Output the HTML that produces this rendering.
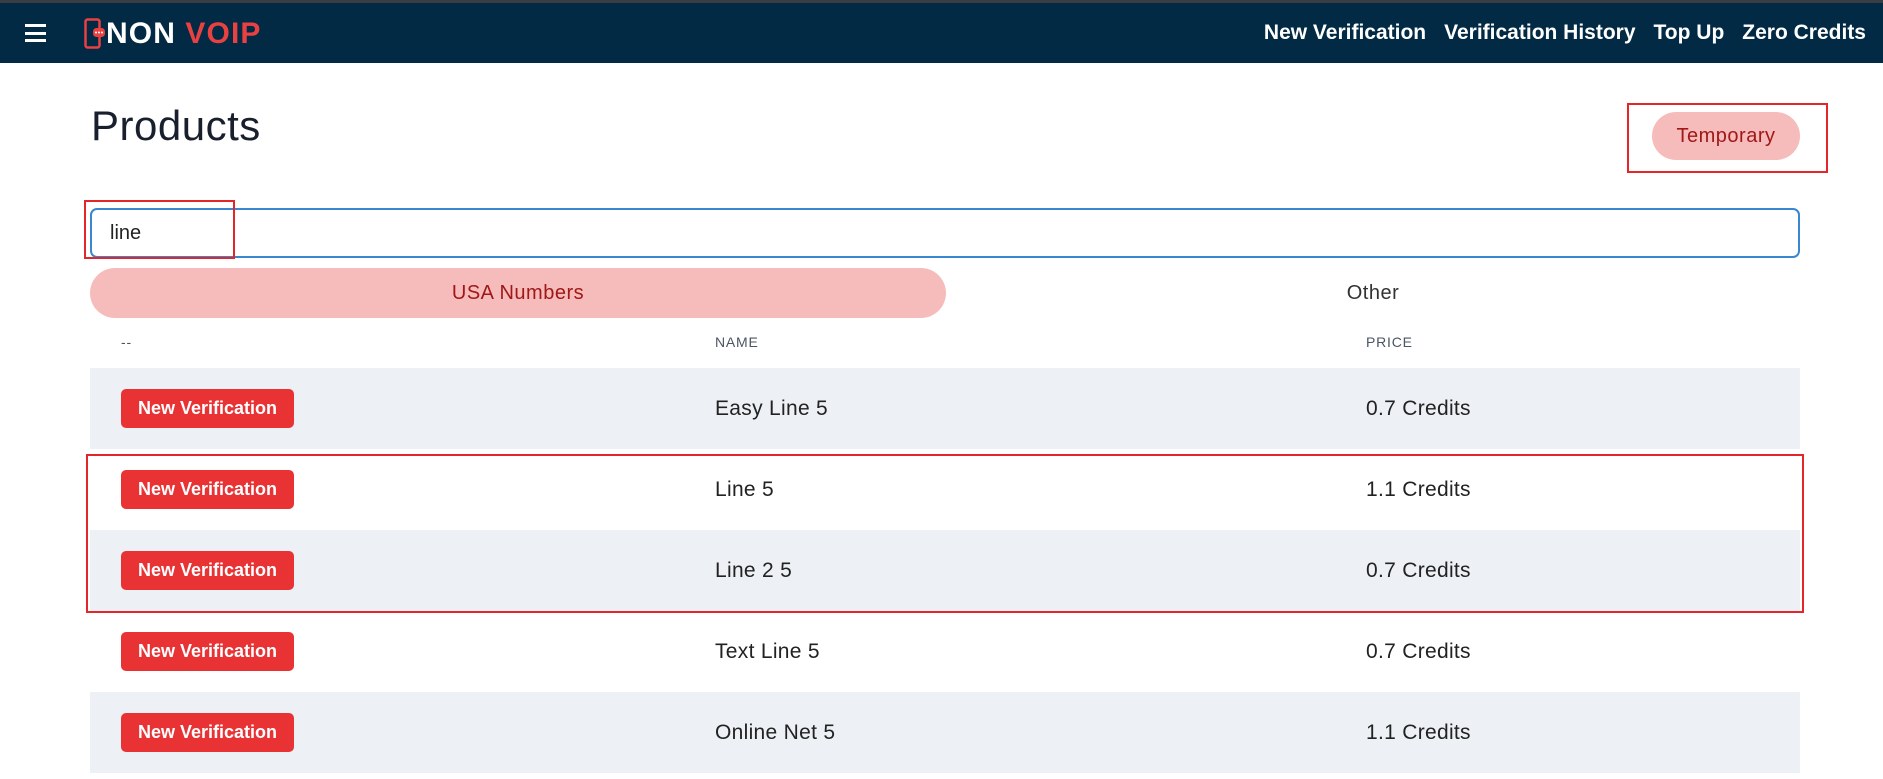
<!DOCTYPE html>
<html><head><meta charset="utf-8"><style>
*{box-sizing:border-box;margin:0;padding:0}
body{width:1883px;height:779px;overflow:hidden;background:#fff;font-family:"Liberation Sans",sans-serif;color:#1f2430;position:relative}
.top{position:absolute;left:0;top:0;width:1883px;height:3px;background:#3a3d42}
.nav{position:absolute;left:0;top:3px;width:1883px;height:60px;background:#022a45}
.ham{position:absolute;left:25px;top:21px;width:21px;height:18px}
.ham i{display:block;height:3px;background:#fff;margin-bottom:4.5px}
.logo{position:absolute;left:84px;top:14px;height:34px;font-weight:bold;font-size:30px;letter-spacing:1.1px;line-height:34px;white-space:nowrap}
.links{position:absolute;right:17px;top:18px;font-size:21px;font-weight:bold;color:#fff;letter-spacing:0px}
.links span{margin-left:18px}
h1{position:absolute;left:91px;top:102px;font-size:42px;font-weight:normal;color:#1a1f2e;letter-spacing:0.5px}
.temp{position:absolute;left:1652px;top:112px;width:148px;height:48px;border-radius:24px;background:#f6bcbb;color:#a01818;font-size:20px;letter-spacing:0.5px;text-align:center;line-height:48px}
.box{position:absolute;border:2px solid #e3262a}
.search{position:absolute;left:90px;top:208px;width:1710px;height:50px;border:2px solid #3a86d0;border-radius:7px;font-size:20px;padding-left:18px;line-height:46px;color:#222}
.tab{position:absolute;top:268px;height:50px;line-height:50px;font-size:20px;text-align:center;letter-spacing:0.5px}
.th{position:absolute;top:334px;font-size:14px;color:#4b5563;letter-spacing:0.8px}
.row{position:absolute;left:90px;width:1710px;height:81px}
.row.g{background:#edf1f5}
.btn{position:absolute;left:31px;top:21px;width:173px;height:39px;background:#e93234;border-radius:5px;color:#fff;font-weight:bold;font-size:18px;text-align:center;line-height:39px;letter-spacing:0px}
.n{position:absolute;left:625px;top:0;line-height:81px;font-size:21px;color:#222;letter-spacing:0.3px}
.p{position:absolute;left:1276px;top:0;line-height:81px;font-size:21px;color:#222;letter-spacing:0.3px}
</style></head><body>
<div class="top"></div>
<div class="nav">
<div class="ham"><i></i><i></i><i></i></div>
<div class="logo"><svg width="22" height="32" viewBox="0 0 22 32" style="vertical-align:top;margin-top:1px"><rect x="1.5" y="1.5" width="14" height="28" rx="2" fill="none" stroke="#e84141" stroke-width="2.5"/><rect x="9" y="10" width="12" height="9" rx="3.5" fill="#e84141"/><circle cx="12" cy="14.5" r="1" fill="#fff"/><circle cx="15" cy="14.5" r="1" fill="#fff"/><circle cx="18" cy="14.5" r="1" fill="#fff"/></svg><span style="color:#fff">NON</span> <span style="color:#e84141">VOIP</span></div>
<div class="links"><span>New Verification</span><span>Verification History</span><span>Top Up</span><span>Zero Credits</span></div>
</div>
<h1>Products</h1>
<div class="temp">Temporary</div>
<div class="box" style="left:1627px;top:103px;width:201px;height:70px"></div>
<div class="search">line</div>
<div class="box" style="left:84px;top:200px;width:151px;height:59px"></div>
<div class="tab" style="left:90px;width:856px;background:#f6bcbb;border-radius:25px;color:#a01818">USA Numbers</div>
<div class="tab" style="left:946px;width:854px;color:#333">Other</div>
<div class="th" style="left:121px">--</div>
<div class="th" style="left:715px">NAME</div>
<div class="th" style="left:1366px">PRICE</div>
<div class="row g" style="top:368px"><div class="btn">New Verification</div><div class="n">Easy Line 5</div><div class="p">0.7 Credits</div></div>
<div class="row" style="top:449px"><div class="btn">New Verification</div><div class="n">Line 5</div><div class="p">1.1 Credits</div></div>
<div class="row g" style="top:530px"><div class="btn">New Verification</div><div class="n">Line 2 5</div><div class="p">0.7 Credits</div></div>
<div class="row" style="top:611px"><div class="btn">New Verification</div><div class="n">Text Line 5</div><div class="p">0.7 Credits</div></div>
<div class="row g" style="top:692px"><div class="btn">New Verification</div><div class="n">Online Net 5</div><div class="p">1.1 Credits</div></div>
<div class="box" style="left:86px;top:454px;width:1718px;height:159px"></div>
</body></html>
